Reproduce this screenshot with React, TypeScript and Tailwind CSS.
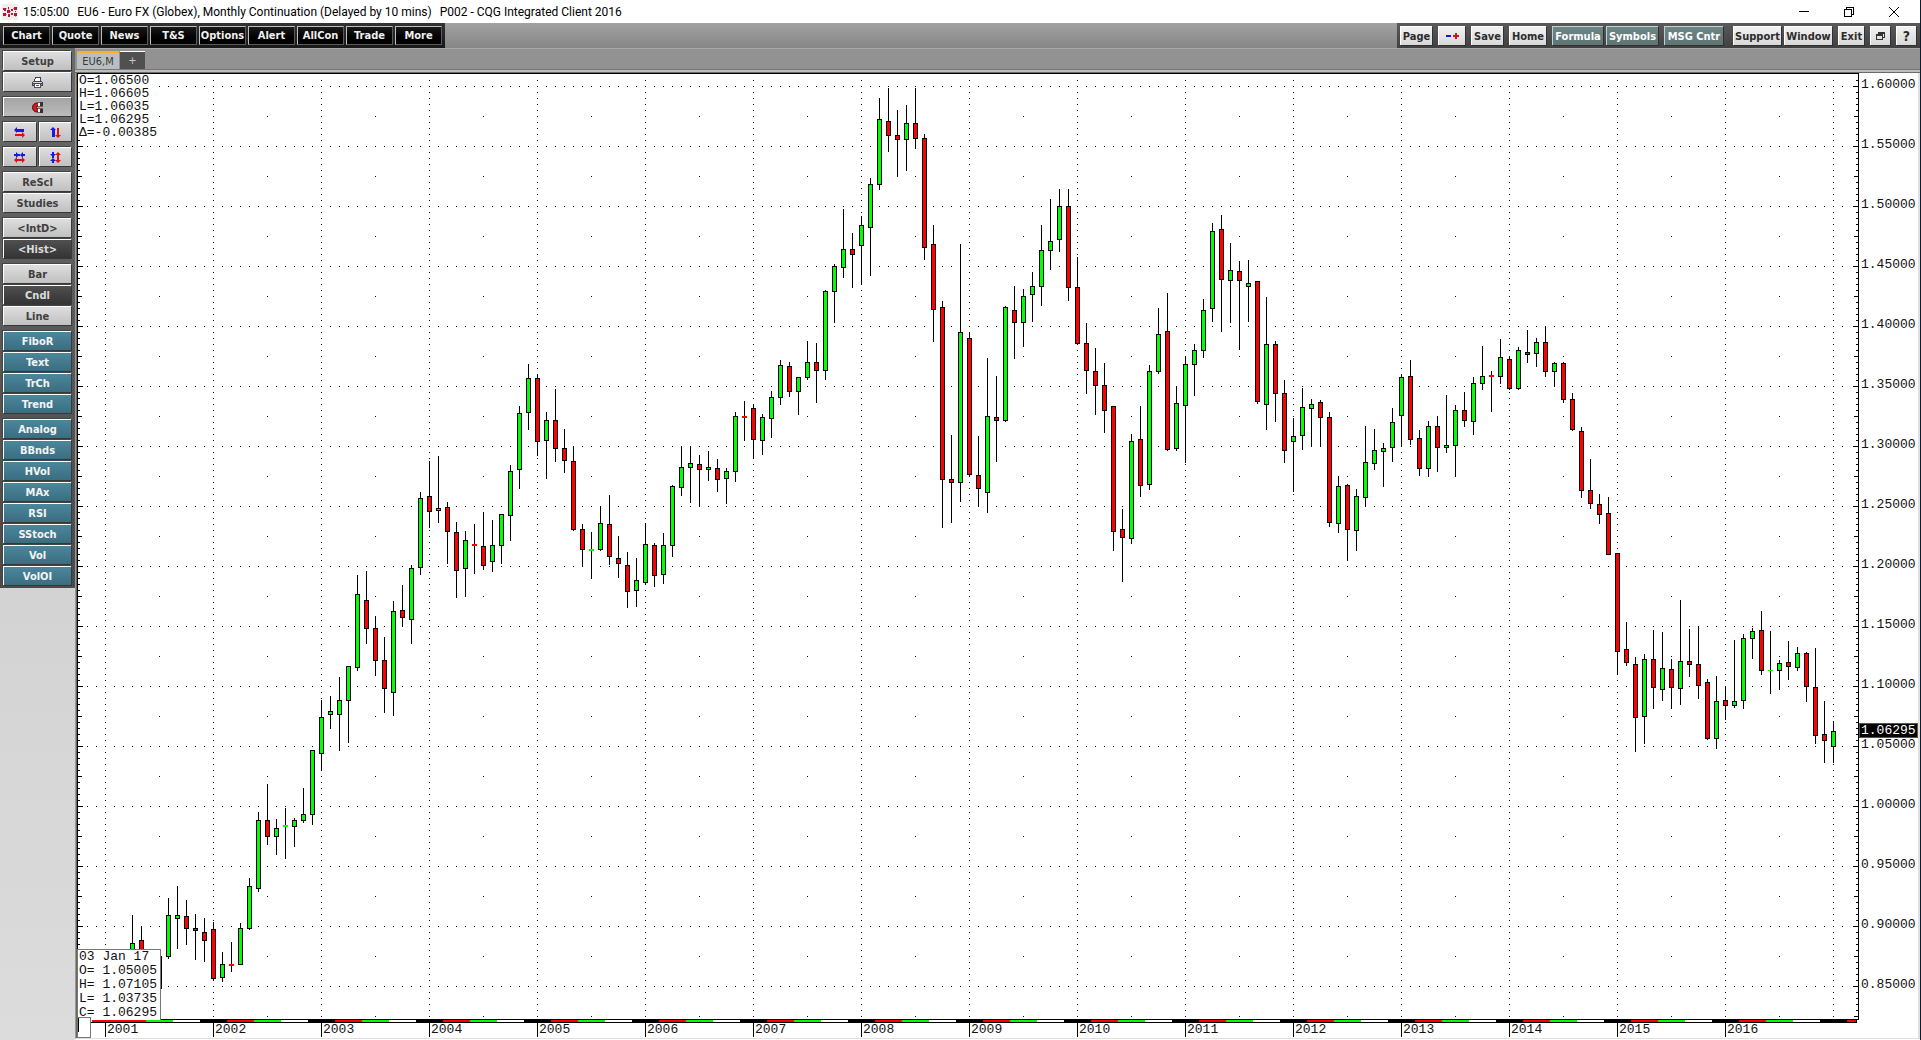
import React from 'react';
import clsx from 'clsx';

// [month, wick top, body top, body bottom, wick bottom, 1 = up / 0 = down]
type Candle = [number, number, number, number, number, number];

const FIRST_MONTH_X = 105;
const MONTH_W = 9;
const TOP_PRICE_Y = 86;
const PRICE_STEP_H = 60;

const candles: Candle[] = [
  [3, 915, 943, 985, 990, 1], [4, 926, 940, 985, 990, 0], [6, 956, 956, 989, 989, 0],
  [7, 898, 915, 957, 959, 1], [8, 886, 915, 919, 949, 1], [9, 900, 916, 929, 945, 0],
  [10, 914, 928, 931, 960, 0], [11, 918, 932, 941, 962, 0],
  // 2002
  [12, 922, 929, 979, 981, 0], [13, 952, 964, 978, 982, 1], [14, 942, 964, 966, 972, 0],
  [15, 923, 928, 965, 965, 1], [16, 878, 886, 929, 930, 1], [17, 812, 820, 889, 892, 1],
  [18, 784, 820, 837, 845, 0], [19, 819, 828, 837, 855, 1], [20, 808, 825, 827, 859, 1],
  [21, 818, 820, 827, 847, 1], [22, 788, 814, 821, 823, 1], [23, 750, 750, 815, 825, 1],
  // 2003
  [24, 700, 717, 754, 771, 1], [25, 696, 711, 715, 729, 1], [26, 677, 700, 715, 751, 1],
  [27, 666, 666, 701, 743, 1], [28, 575, 594, 668, 671, 1], [29, 571, 600, 629, 644, 0],
  [30, 616, 628, 661, 676, 0], [31, 637, 660, 689, 713, 0], [32, 601, 611, 693, 716, 1],
  [33, 585, 610, 618, 627, 0], [34, 565, 568, 620, 644, 1], [35, 492, 498, 568, 575, 1],
  // 2004
  [36, 461, 496, 512, 528, 0], [37, 456, 508, 511, 523, 1], [38, 502, 507, 532, 564, 0],
  [39, 522, 532, 571, 598, 0], [40, 531, 540, 569, 597, 1], [41, 524, 544, 546, 574, 0],
  [42, 512, 546, 566, 570, 0], [43, 520, 545, 562, 572, 1], [44, 514, 514, 546, 564, 1],
  [45, 465, 471, 516, 541, 1], [46, 406, 413, 470, 489, 1], [47, 364, 378, 413, 430, 1],
  // 2005
  [48, 374, 378, 442, 456, 0], [49, 412, 420, 441, 479, 1], [50, 389, 420, 449, 462, 0],
  [51, 429, 448, 461, 473, 0], [52, 446, 461, 530, 531, 0], [53, 524, 529, 550, 567, 0],
  [54, 532, 549, 551, 579, 1], [55, 506, 523, 550, 551, 1], [56, 495, 524, 557, 565, 0],
  [57, 536, 558, 564, 578, 0], [58, 552, 565, 592, 608, 0], [59, 558, 580, 591, 607, 1],
  // 2006
  [60, 523, 544, 583, 585, 1], [61, 543, 545, 576, 587, 0], [62, 533, 545, 575, 584, 1],
  [63, 485, 486, 546, 557, 1], [64, 446, 467, 488, 496, 1], [65, 446, 463, 468, 503, 1],
  [66, 455, 464, 470, 507, 0], [67, 451, 467, 470, 481, 1], [68, 459, 468, 480, 492, 0],
  [69, 468, 471, 479, 504, 1], [70, 412, 416, 472, 482, 1], [71, 401, 416, 418, 441, 0],
  // 2007
  [72, 404, 408, 440, 459, 0], [73, 414, 417, 441, 455, 1], [74, 391, 397, 419, 438, 1],
  [75, 360, 365, 398, 405, 1], [76, 362, 366, 392, 397, 0], [77, 377, 377, 392, 415, 1],
  [78, 341, 362, 378, 380, 1], [79, 343, 362, 371, 403, 0], [80, 290, 291, 371, 380, 1],
  [81, 264, 266, 292, 323, 1], [82, 209, 249, 268, 278, 1], [83, 233, 249, 255, 288, 0],
  // 2008
  [84, 216, 225, 246, 285, 1], [85, 178, 184, 228, 276, 1], [86, 98, 119, 185, 190, 1],
  [87, 88, 121, 136, 152, 0], [88, 110, 135, 140, 177, 0], [89, 105, 123, 140, 171, 1],
  [90, 88, 123, 139, 149, 0], [91, 134, 138, 248, 260, 0], [92, 225, 244, 310, 342, 0],
  [93, 301, 307, 480, 528, 0], [94, 435, 479, 483, 523, 0], [95, 244, 332, 483, 502, 1],
  // 2009
  [96, 332, 338, 475, 477, 0], [97, 436, 475, 489, 507, 0], [98, 358, 416, 493, 513, 1],
  [99, 376, 417, 421, 462, 0], [100, 306, 307, 421, 422, 1], [101, 286, 310, 323, 359, 0],
  [102, 289, 296, 323, 347, 1], [103, 272, 286, 295, 322, 1], [104, 225, 250, 287, 306, 1],
  [105, 199, 241, 251, 270, 1], [106, 189, 206, 240, 252, 1], [107, 189, 206, 288, 301, 0],
  // 2010
  [108, 257, 287, 344, 345, 0], [109, 323, 343, 371, 394, 0], [110, 348, 371, 386, 415, 0],
  [111, 363, 385, 411, 433, 0], [112, 406, 406, 532, 551, 0], [113, 509, 529, 538, 582, 0],
  [114, 434, 441, 539, 544, 1], [115, 406, 439, 486, 497, 0], [116, 365, 371, 485, 490, 1],
  [117, 308, 334, 372, 374, 1], [118, 293, 331, 450, 451, 0], [119, 386, 403, 449, 451, 1],
  // 2011
  [120, 356, 364, 406, 463, 1], [121, 344, 350, 365, 396, 1], [122, 299, 310, 351, 358, 1],
  [123, 223, 231, 309, 322, 1], [124, 215, 229, 280, 332, 0], [125, 243, 270, 281, 323, 1],
  [126, 261, 271, 281, 350, 0], [127, 260, 283, 287, 322, 1], [128, 281, 281, 402, 404, 0],
  [129, 297, 344, 405, 430, 1], [130, 341, 344, 394, 422, 0], [131, 380, 393, 451, 463, 0],
  // 2012
  [132, 418, 436, 442, 492, 1], [133, 388, 407, 436, 450, 1], [134, 399, 404, 409, 447, 1],
  [135, 400, 402, 418, 447, 0], [136, 412, 417, 523, 527, 0], [137, 476, 486, 524, 533, 1],
  [138, 484, 485, 530, 561, 0], [139, 489, 496, 531, 551, 1], [140, 426, 462, 498, 507, 1],
  [141, 429, 450, 464, 470, 1], [142, 443, 448, 452, 487, 1], [143, 408, 422, 448, 462, 1],
  // 2013
  [144, 374, 377, 416, 447, 1], [145, 360, 376, 440, 445, 0], [146, 430, 438, 469, 476, 0],
  [147, 421, 426, 469, 477, 1], [148, 416, 426, 448, 472, 0], [149, 395, 445, 448, 453, 1],
  [150, 405, 410, 446, 477, 1], [151, 392, 410, 421, 427, 0], [152, 377, 383, 422, 435, 1],
  [153, 346, 376, 384, 390, 1], [154, 371, 375, 377, 412, 0], [155, 339, 357, 377, 384, 1],
  // 2014
  [156, 356, 359, 389, 390, 0], [157, 347, 350, 389, 390, 1], [158, 330, 352, 355, 363, 0],
  [159, 338, 342, 354, 367, 1], [160, 326, 342, 372, 377, 0], [161, 362, 363, 372, 387, 1],
  [162, 362, 363, 400, 403, 0], [163, 393, 399, 430, 431, 0], [164, 427, 431, 491, 498, 0],
  [165, 459, 490, 504, 509, 0], [166, 494, 504, 515, 524, 0], [167, 497, 513, 555, 555, 0],
  // 2015
  [168, 553, 553, 652, 675, 0], [169, 622, 649, 663, 666, 0], [170, 657, 664, 718, 752, 0],
  [171, 654, 659, 717, 744, 1], [172, 630, 659, 688, 709, 0], [173, 632, 668, 690, 701, 1],
  [174, 659, 669, 688, 709, 0], [175, 600, 661, 689, 705, 1], [176, 629, 661, 665, 677, 0],
  [177, 626, 664, 686, 699, 0], [178, 679, 682, 739, 740, 0], [179, 676, 701, 739, 749, 1],
  // 2016
  [180, 686, 700, 706, 720, 0], [181, 640, 701, 706, 708, 1], [182, 634, 638, 701, 709, 1],
  [183, 628, 631, 639, 659, 1], [184, 611, 630, 671, 675, 0], [185, 631, 670, 671, 694, 1],
  [186, 660, 663, 671, 690, 1], [187, 641, 662, 667, 680, 0], [188, 647, 653, 668, 671, 1],
  [189, 652, 653, 687, 702, 0], [190, 648, 687, 736, 744, 0], [191, 701, 734, 741, 763, 0],
  [192, 721, 731, 747, 763, 1],
];

const years = Array.from({ length: 16 }, (_, i) => 2001 + i);
const prices = Array.from({ length: 16 }, (_, i) => (1.6 - i * 0.05).toFixed(5));
const bandColors = ['#000000', '#ff0000', '#00ff00', '#ffffff'];

const leftMenu = ['Chart', 'Quote', 'News', 'T&S', 'Options', 'Alert', 'AllCon', 'Trade', 'More'];

const LogoIcon = () => (
  <svg width="16" height="16" viewBox="0 0 16 16" shapeRendering="crispEdges" aria-hidden="true">
    <rect width="16" height="16" fill="#f1eeee" />
    <path d="M1 4h3v2H1zM2 6h2v1H2zM1 9h3v3H1zM6 3h1v2H6zM5 6h3v3H5zM6 10h2v3H6zM9 5h2v2H9zM9 9h2v2H9zM12 3h3v3h-3zM13 7h1v1h-1zM12 9h3v3h-3z" fill="#b5173a" />
    <path d="M4 4h1v1H4zM4 10h1v1H4zM8 7h1v1H8zM11 4h1v1h-1zM6 5h1v1H6zM13 12h1v1h-1z" fill="#d98a9a" />
  </svg>
);

const PrinterIcon = () => (
  <svg width="11" height="11" viewBox="0 0 11 11" shapeRendering="crispEdges" aria-hidden="true">
    <path d="M3 0h6v4H2z" fill="#444" />
    <path d="M4 1h4v3H3z" fill="#fff" />
    <path d="M1 4h9v1h1v4H0V5h1z" fill="#444" />
    <path d="M1 5h9v1H1z" fill="#ddd" />
    <path d="M1 7h9v1H1z" fill="#999" />
    <path d="M2 7h7v4H2z" fill="#555" />
    <path d="M3 7h5v3H3z" fill="#fff" />
    <path d="M4 8h3v1H4z" fill="#2a55ff" />
  </svg>
);

const MagnetIcon = () => (
  <svg width="11" height="11" viewBox="0 0 11 11" aria-hidden="true">
    <path d="M11 1H5a4.500 4.500 0 0 0 0 9h6V7H6a1.500 1.500 0 0 1 0-3h5z" fill="#d51c1c" stroke="#4a0808" />
    <path d="M6 1h2v3H6zM6 7h2v3H6z" fill="#f4f4f4" />
    <path d="M8 0h3v4H8zM8 7h3v4H8z" fill="#333" />
  </svg>
);

// flipped and turned for the vertical pair, inward heads for the squeeze pair
const ArrowsIcon = ({ vertical, both }: { vertical?: boolean; both?: boolean }) => (
  <svg width="11" height="11" viewBox="0 0 11 11" className={vertical ? '-scale-y-100 rotate-90' : ''} aria-hidden="true">
    <path d={both ? 'M0 2h2V0l3 3-3 3V4H0zM11 2H9V0L6 3l3 3V4h2zM4 2h3v2H4z' : 'M0 3l3-3v2h7v3H3v1z'} fill="#1818e0" />
    <path d={both ? 'M0 8l3-3v2h5V5l3 3-3 3V9H3v2z' : 'M1 7h7V5l3 3-3 3V9H1z'} fill="#e01010" />
  </svg>
);

const RestoreIcon = ({ size, heavy }: { size: number; heavy?: boolean }) => (
  <svg width={size} height={size} viewBox="0 0 10 10" fill="none" stroke={heavy ? '#333' : '#000'} shapeRendering="crispEdges" aria-hidden="true">
    {heavy ? (
      <path d="M0.500 3.500h6v5h-6zM0.500 4.500h6M2.500 3.500v-2h6v5h-2M2.500 2.500h6" />
    ) : (
      <path d="M0.500 2.500h7v7h-7zM2.500 2.500v-2h7v7h-2" />
    )}
  </svg>
);

type SideTone = 'light' | 'pressed' | 'dark' | 'teal';

const toneClass: Record<SideTone, string> = {
  light: 'from-[#dedede] to-[#c0c0c0] text-[#404040]',
  pressed: 'from-[#a4a4a4] to-[#bcbcbc] text-[#404040]',
  dark: 'from-[#505050] to-[#343434] text-[#dcdcdc]',
  teal: 'from-[#4b879c] to-[#3b6d80] text-[#f4f4f4]',
};

const SideButton = ({ tone = 'light', label, children }: { tone?: SideTone; label?: string; children?: React.ReactNode }) => (
  <button
    type="button"
    aria-label={label}
    className={clsx(
      'flex h-[19px] min-w-0 flex-1 items-center justify-center border-t border-l border-white bg-linear-to-b text-[11px] leading-none font-bold shadow-[1px_1px_0_#383838,-1px_-1px_0_#444]',
      toneClass[tone],
    )}
  >
    {children}
  </button>
);

const sideGroups: { tone: SideTone; items: string[] }[] = [
  { tone: 'light', items: ['ReScl', 'Studies'] },
  { tone: 'light', items: ['<IntD>', '<Hist>'] },
  { tone: 'light', items: ['Bar', 'Cndl', 'Line'] },
  { tone: 'teal', items: ['FiboR', 'Text', 'TrCh', 'Trend'] },
  { tone: 'teal', items: ['Analog', 'BBnds', 'HVol', 'MAx', 'RSI', 'SStoch', 'Vol', 'VolOI'] },
];
const active = ['<Hist>', 'Cndl'];

const Sidebar = () => (
  <aside className="flex w-[75px] shrink-0 flex-col bg-linear-to-b from-[#c8c8c8] to-[#dcdcdc]">
    <div className="flex flex-col gap-1.5 bg-linear-to-b from-[#6a6a6a] to-[#4a4a4a] pt-[3px] pr-1 pb-[3px] pl-[3px]">
      <div className="flex flex-col gap-0.5">
        <div className="flex"><SideButton>Setup</SideButton></div>
        <div className="flex"><SideButton label="Print"><PrinterIcon /></SideButton></div>
      </div>
      <div className="flex"><SideButton tone="pressed" label="Magnet"><MagnetIcon /></SideButton></div>
      <div className="flex gap-[3px]">
        <SideButton label="Scroll"><ArrowsIcon /></SideButton>
        <SideButton label="Shift"><ArrowsIcon vertical /></SideButton>
      </div>
      <div className="flex gap-[3px]">
        <SideButton label="Squeeze"><ArrowsIcon both /></SideButton>
        <SideButton label="Stretch"><ArrowsIcon vertical both /></SideButton>
      </div>
      {sideGroups.map((group) => (
        <div key={group.items[0]} className="flex flex-col gap-0.5">
          {group.items.map((item) => (
            <div key={item} className="flex">
              <SideButton tone={active.includes(item) ? 'dark' : group.tone}>{item}</SideButton>
            </div>
          ))}
        </div>
      ))}
    </div>
  </aside>
);

const TopButton = ({ className, label, teal, children }: { className: string; label?: string; teal?: boolean; children: React.ReactNode }) => (
  <button
    type="button"
    aria-label={label}
    className={clsx(
      'flex h-[19px] shrink-0 items-center justify-center border-t border-l bg-linear-to-b whitespace-nowrap shadow-[1px_1px_0_#303030]',
      teal ? 'border-[#c4d0d0] from-[#6d8686] to-[#5f7474] text-white' : 'border-white from-[#f2f2f2] to-[#d8d8d8] text-[#2c2c2c]',
      className,
    )}
  >
    {children}
  </button>
);

const Toolbar = () => (
  <nav className="flex h-[25px] shrink-0 items-stretch justify-between bg-linear-to-b from-[#a2a2a2] to-[#868686] text-[11px] leading-none font-bold">
    <div className="flex gap-0.5 bg-linear-to-b from-[#333] to-[#181818] px-[3px] pt-[3px]">
      {leftMenu.map((item) => (
        <button key={item} type="button" className="flex h-[19px] w-[47px] items-center justify-center border border-[#5a5a5a] border-t-[#bdbdbd] border-l-[#bdbdbd] bg-linear-to-b from-[#1c1c1c] to-black text-[#f0f0f0]">
          {item}
        </button>
      ))}
    </div>
    <div className="flex bg-linear-to-b from-[#5a5a5a] to-[#404040] pt-[3px] pr-1 pl-[3px]">
      <TopButton className="w-8">Page</TopButton>
      <TopButton className="ml-1.5 w-[27px]" label="Zoom">
        <svg width="13" height="7" viewBox="0 0 13 7" shapeRendering="crispEdges" aria-hidden="true">
          <path d="M0 2h5v2H0z" fill="#1818d0" />
          <path d="M7 2h6v2H7zM9 0h2v6H9z" fill="#c81818" />
        </svg>
      </TopButton>
      <TopButton className="ml-1.5 w-8">Save</TopButton>
      <TopButton className="ml-1.5 w-[37px]">Home</TopButton>
      <TopButton teal className="ml-1.5 w-[51px]">Formula</TopButton>
      <TopButton teal className="ml-[3px] w-[52px]">Symbols</TopButton>
      <TopButton teal className="ml-1.5 w-[59px]">MSG Cntr</TopButton>
      <TopButton className="ml-2.5 w-12">Support</TopButton>
      <TopButton className="ml-[3px] w-12">Window</TopButton>
      <TopButton className="ml-1.5 w-[26px]">Exit</TopButton>
      <TopButton className="ml-1.5 w-5" label="Restore chart"><RestoreIcon size={10} heavy /></TopButton>
      <TopButton className="ml-1.5 w-5 text-sm">?</TopButton>
    </div>
  </nav>
);

const TitleBar = () => (
  <header className="flex h-[23px] shrink-0 items-center justify-between pr-[21px] pl-0.5 font-['Roboto',sans-serif] text-[12px] leading-4 text-black">
    <div className="flex items-center whitespace-pre">
      <LogoIcon />
      <span className="ml-[5px]">15:05:00</span>
      <h1 className="ml-2">EU6 - Euro FX (Globex), Monthly Continuation (Delayed by 10 mins)</h1>
      <span className="ml-2">P002 - CQG Integrated Client 2016</span>
    </div>
    <div className="flex items-center gap-[35px]">
      <button type="button" aria-label="Minimize">
        <svg width="10" height="10" viewBox="0 0 10 10" aria-hidden="true"><path d="M0 4h10v1H0z" /></svg>
      </button>
      <button type="button" aria-label="Restore"><RestoreIcon size={10} /></button>
      <button type="button" aria-label="Close">
        <svg width="10" height="10" viewBox="0 0 10 10" stroke="#000" aria-hidden="true"><path d="M0 0l10 10M10 0L0 10" /></svg>
      </button>
    </div>
  </header>
);

const Grid = () => {
  const rows = Array.from({ length: 16 }, (_, i) => TOP_PRICE_Y + i * PRICE_STEP_H);
  const cols = Array.from({ length: 17 }, (_, i) => FIRST_MONTH_X + i * 12 * MONTH_W);
  const ticks = Array.from({ length: 157 }, (_, i) => 80 + i * 6);
  return (
    <g>
      {rows.map((y) => (
        <path key={y} d={`M87 ${y + 0.5}H1843`} stroke="#000" strokeDasharray="1 8" />
      ))}
      {cols.map((x) => (
        <path key={x} d={`M${x + 0.5} 80V1017`} stroke="#000" strokeDasharray="1 5" />
      ))}
      {cols.slice(0, 16).map((x) => (
        <path key={x} d={`M${x + 54.5} 116V1017`} stroke="#000" strokeDasharray="1 59" />
      ))}
      {ticks.map((y) => {
        const pos = (y - TOP_PRICE_Y) % PRICE_STEP_H;
        const len = pos === 0 ? 5 : pos === 30 ? 4 : 2;
        return <path key={y} d={`M78 ${y}h${len}v1h-${len}zM1858 ${y}h-${len}v1h${len}z`} />;
      })}
    </g>
  );
};

const TimeBand = () => {
  const parts: React.ReactNode[] = [];
  for (let i = 0; 92 + i * 27 < 1883; i++) {
    const start = i === 0 ? 92 : 119 + (i - 1) * 27;
    const end = Math.min(119 + i * 27, 1856);
    if (end <= start) break;
    const color = i === 0 ? '#ff0000' : bandColors[i % 4];
    parts.push(<rect key={i} x={start} y={1020} width={end - start} height={2} fill={color} />);
  }
  return (
    <g>
      <rect x={77} y={1019} width={1782} height={1} />
      {parts}
      <rect x={77} y={1022} width={1779} height={1} />
      <rect x={1856} y={1019} width={1} height={4} />
    </g>
  );
};

const CandleShape = ({ candle }: { candle: Candle }) => {
  const [month, high, top, bottom, low, up] = candle;
  const x = FIRST_MONTH_X + month * MONTH_W;
  const fill = up ? '#00ff00' : '#ff0000';
  const flat = bottom - top < 3;
  return (
    <g>
      <rect x={x} y={high} width={1} height={low - high} />
      <rect x={x - 2} y={top} width={5} height={bottom - top} fill={flat ? fill : '#000'} />
      {!flat && <rect x={x - 1} y={top + 1} width={3} height={bottom - top - 2} fill={fill} />}
    </g>
  );
};

const mono = "font-['Liberation_Mono',monospace] text-[13px] text-[#111]";

const Chart = () => (
  <main className="flex min-h-0 flex-1">
    <section className={clsx('relative flex min-w-0 flex-1 flex-col', mono)} aria-label="EU6 monthly candles">
      <svg className="block min-h-0 w-full flex-1" viewBox="77 73 1782 950" preserveAspectRatio="none" shapeRendering="crispEdges">
        <Grid />
        {candles.map((c) => <CandleShape key={c[0]} candle={c} />)}
        <path d="M77 73h1782v1H77zM77 73h1v950h-1zM1858 73h1v947h-1z" />
        <TimeBand />
      </svg>
      <div className="flex h-[15px] shrink-0 pr-[26px] pl-7">
        {years.map((year) => (
          <span key={year} className="h-3.5 flex-1 border-l border-black pl-px leading-[13px]">{year}</span>
        ))}
      </div>
      <div className="absolute top-px left-px bg-white pl-px leading-[13px] whitespace-pre">
        <p>O=1.06500</p>
        <p>H=1.06605</p>
        <p>L=1.06035</p>
        <p>L=1.06295</p>
        <p>Δ=-0.00385</p>
      </div>
      <div className="absolute bottom-[18px] left-0 w-[84px] border-t border-r border-l border-[#777] bg-white pl-px leading-[14px] whitespace-pre">
        <p>03 Jan 17</p>
        <p>O= 1.05005</p>
        <p>H= 1.07105</p>
        <p>L= 1.03735</p>
        <p>C= 1.06295</p>
      </div>
      <div className="absolute bottom-0 left-0 h-[21px] w-3.5 border border-[#777] bg-white">
        <div className="h-3.5 border-l border-black" />
      </div>
    </section>
    <div className={clsx('relative flex w-[59px] shrink-0 flex-col justify-between pt-0.5 pb-[43px] pl-0.5', mono)}>
      {prices.map((price) => <span key={price} className="leading-5">{price}</span>)}
      <output className="absolute top-[650px] left-0 h-[15px] w-full border border-[#555] bg-black pl-px leading-[13px] text-white">1.06295</output>
    </div>
  </main>
);

const App: React.FC = () => {
  return (
    <div className="flex h-screen flex-col overflow-hidden border-r border-[#0a1a33] bg-white font-['DejaVu_Sans_Condensed','DejaVu_Sans',sans-serif]">
      <TitleBar />
      <Toolbar />
      <div className="flex min-h-0 flex-1">
        <Sidebar />
        <div className="flex min-w-0 flex-1 flex-col">
          <div className="flex h-[21px] shrink-0 gap-px border-t border-[#a8a8a8] bg-[#929292] pt-0.5 pl-0.5 text-[11px] leading-none">
            <button type="button" className="h-[18px] w-[42px] border-t-2 border-[#ffb020] bg-[#b9bfc1] text-[#3a3a3a]">EU6,M</button>
            <button type="button" aria-label="Add page" className="h-[18px] w-[25px] border-t border-white bg-[#505050] text-[#c8c8c8]">+</button>
          </div>
          <div className="h-1 shrink-0 border-t border-b border-t-[#777] border-b-[#6a6a6a] bg-[#bdbdbd]" />
          <div className="flex min-h-0 flex-1 border-r-2 border-b border-l border-r-[#e0e0e0] border-b-[#e0e0e0] border-l-[#999]">
            <div className="w-px shrink-0 bg-[#666]" />
            <Chart />
          </div>
          <div className="h-px shrink-0 bg-white" />
        </div>
      </div>
    </div>
  );
};

export default App;
